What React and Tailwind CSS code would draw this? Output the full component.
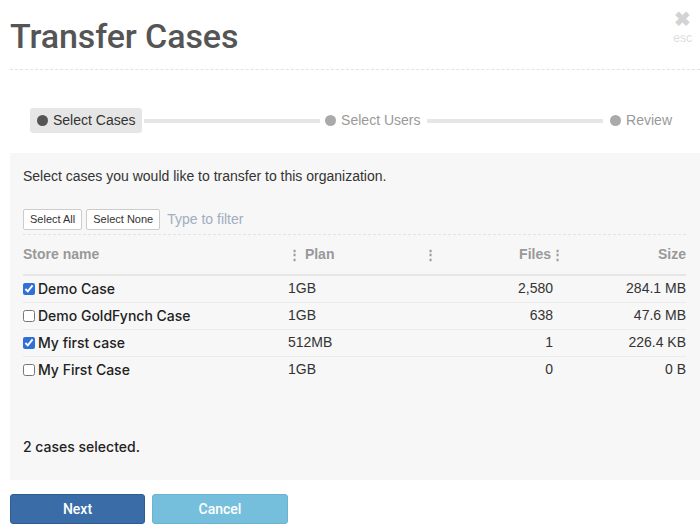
import { useState } from "react";

const cases = [
  { name: "Demo Case", plan: "1GB", files: "2,580", size: "284.1 MB", checked: true },
  { name: "Demo GoldFynch Case", plan: "1GB", files: "638", size: "47.6 MB", checked: false },
  { name: "My first case", plan: "512MB", files: "1", size: "226.4 KB", checked: true },
  { name: "My First Case", plan: "1GB", files: "0", size: "0 B", checked: false },
];

function Grip() {
  return <span className="inline-block text-[13px] leading-none font-bold text-[#999]">⋮</span>;
}

export default function App() {
  const [rows, setRows] = useState(cases);
  const selected = rows.filter((r) => r.checked).length;

  const toggle = (i) =>
    setRows(rows.map((r, j) => (j === i ? { ...r, checked: !r.checked } : r)));

  return (
    <div className="w-[700px] h-[532px] bg-white font-['Liberation_Sans',sans-serif] text-[#333] overflow-hidden">
      {/* header */}
      <div className="flex justify-between pl-[10px] pr-[8px]">
        <h1 className="font-['Roboto',sans-serif] font-medium text-[34px] leading-none pt-[19px] text-[#555] tracking-[-0.1px]">
          Transfer Cases
        </h1>
        <div className="flex flex-col items-center pt-[9px] text-[#d3d3d3]">
          <span className="text-[20px] font-bold leading-none">✖</span>
          <span className="text-[12px] leading-none mt-[3px] text-[#ddd]">esc</span>
        </div>
      </div>
      <div className="ml-[10px] mt-[16px] border-t border-dashed border-[#e3e3e3]" />

      {/* stepper */}
      <div className="flex items-center ml-[30px] mr-[28px] mt-[38px] text-[14px]">
        <div className="flex items-center gap-[5px] bg-[#e6e6e6] rounded-[3px] px-[7px] h-[25px] text-[#333]">
          <span className="w-[11px] h-[11px] rounded-full bg-[#555]" />
          Select Cases
        </div>
        <div className="flex-1 h-[4px] bg-[#e6e6e6] ml-[2px] mr-[5px]" />
        <div className="flex items-center gap-[5px] text-[#999]">
          <span className="w-[11px] h-[11px] rounded-full bg-[#aaa]" />
          Select Users
        </div>
        <div className="flex-1 h-[4px] bg-[#e6e6e6] ml-[7px] mr-[7px]" />
        <div className="flex items-center gap-[5px] text-[#999]">
          <span className="w-[11px] h-[11px] rounded-full bg-[#aaa]" />
          Review
        </div>
      </div>

      {/* panel */}
      <div className="ml-[10px] mt-[20px] h-[327px] bg-[#f7f7f7] pl-[13px] pr-[14px] pt-[13px] flex flex-col">
        <p className="text-[14px] text-[#333]">Select cases you would like to transfer to this organization.</p>
        <div className="flex items-center gap-[4px] mt-[22px]">
          <button className="h-[21px] px-[6px] text-[11px] bg-white border border-[#ccc] rounded-[2px] text-[#333]">Select All</button>
          <button className="h-[21px] px-[6px] text-[11px] bg-white border border-[#ccc] rounded-[2px] text-[#333]">Select None</button>
          <input
            className="ml-[3px] text-[14px] bg-transparent outline-none placeholder:text-[#a0aec0]"
            placeholder="Type to filter"
          />
        </div>
        <div className="mt-[4px] border-t border-dashed border-[#e3e3e3]" />

        <table className="w-full table-fixed text-[14px]">
          <colgroup>
            <col className="w-[265px]" />
            <col className="w-[136px]" />
            <col className="w-[90px]" />
            <col className="w-[50px]" />
            <col />
          </colgroup>
          <thead>
            <tr className="border-b-2 border-[#e6e6e6] text-[#999]">
              <th className="text-left font-bold h-[40px] pb-[1px]">Store name</th>
              <th className="text-left font-bold pb-[1px]">
                <Grip /> Plan
              </th>
              <th className="text-left font-bold pb-[1px]">
                <Grip />
              </th>
              <th className="text-right font-bold pb-[1px] whitespace-nowrap">
                Files<Grip />
              </th>
              <th className="text-right font-bold pb-[1px]">Size</th>
            </tr>
          </thead>
          <tbody>
            {rows.map((r, i) => (
              <tr key={r.name} className="border-b border-[#ebebeb] last:border-b-0 h-[27px]">
                <td className="text-[#222] font-['Inter',sans-serif] font-medium">
                  <label className="flex items-center gap-[3px]">
                    <input
                      type="checkbox"
                      checked={r.checked}
                      onChange={() => toggle(i)}
                      className="w-[12px] h-[12px] m-0 accent-[#2f6fd8]"
                    />
                    {r.name}
                  </label>
                </td>
                <td className="text-[#333]">{r.plan}</td>
                <td />
                <td className="text-right text-[#333] pr-[11px]">{r.files}</td>
                <td className="text-right text-[#333]">{r.size}</td>
              </tr>
            ))}
          </tbody>
        </table>

        <p className="mt-auto mb-[23px] text-[14px] text-[#222] font-['Inter',sans-serif] font-medium">
          {selected} cases selected.
        </p>
      </div>

      {/* footer */}
      <div className="flex gap-[7px] ml-[10px] mt-[14px]">
        <button className="w-[135px] h-[30px] rounded-[3px] bg-[#3a6da8] border border-[#2e5d92] text-white text-[14px] font-['Roboto',sans-serif] font-medium">
          Next
        </button>
        <button className="w-[136px] h-[30px] rounded-[3px] bg-[#76bfdc] border border-[#6bb3d0] text-white text-[14px] font-['Roboto',sans-serif] font-medium">
          Cancel
        </button>
      </div>
    </div>
  );
}
